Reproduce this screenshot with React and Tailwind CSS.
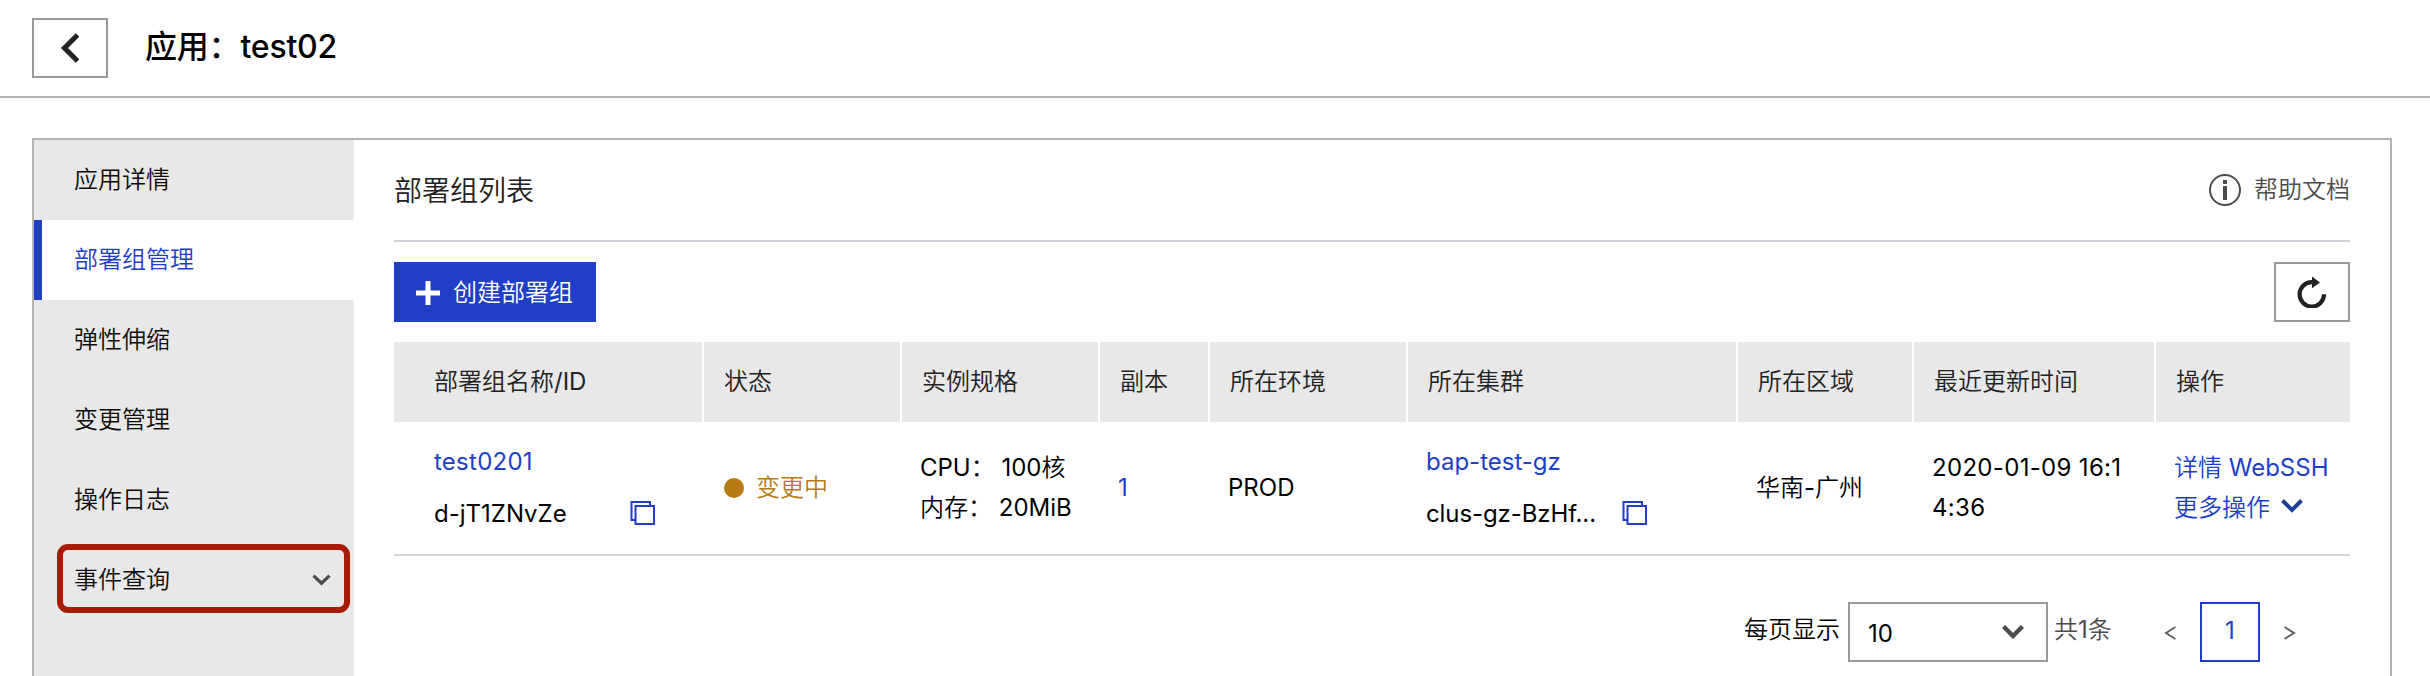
const CopyIcon = () => (
  <svg className="-mt-0.5 block h-6 w-[25px] shrink-0" viewBox="0 0 25 24" fill="none" stroke="#213fc6" strokeWidth="2">
    <path d="M5 19H1.5V1H20v4" />
    <rect x="5.5" y="5" width="18.5" height="18" />
  </svg>
);

const menu = ['应用详情', '部署组管理', '弹性伸缩', '变更管理', '操作日志', '事件查询'];
const columns = ['状态', '实例规格', '副本', '所在环境', '所在集群', '所在区域', '最近更新时间', '操作'];
const gridCols =
  'grid grid-cols-[308px_196px_196px_108px_196px_328px_174px_240px_194px] gap-x-[2px]';

function Sidebar() {
  return (
    <nav className="w-80 shrink-0 bg-[#e8e8e8]">
      {menu.map((label) => {
        const active = label === '部署组管理';
        const last = label === '事件查询';
        return (
          <div
            key={label}
            className={
              active
                ? 'flex h-20 items-center border-l-8 border-[#213fc6] bg-white pl-8 text-[#213fc6]'
                : 'relative flex h-20 items-center justify-between pl-10 pr-[23px] text-[#0c0c0c]'
            }
          >
            <span className="whitespace-nowrap">{label}</span>
            {last && (
              <>
                <svg className="h-3 w-[19px]" viewBox="0 0 19 12" fill="none" stroke="#4c4c4c" strokeWidth="3.2">
                  <path d="M1.5 1.6l8 7.6 8-7.6" />
                </svg>
                <span className="absolute left-[23px] top-[4px] h-[69px] w-[293px] rounded-[11px] border-[6px] border-[#a61c06]" />
              </>
            )}
          </div>
        );
      })}
    </nav>
  );
}

function Table() {
  return (
    <div className="mt-5">
      <div className={`${gridCols} h-20 leading-20 text-[#222]`}>
        <div className="bg-[#e8e8e8] pl-10">部署组名称/ID</div>
        {columns.map((c) => (
          <div key={c} className="bg-[#e8e8e8] pl-5">
            {c}
          </div>
        ))}
      </div>
      <div className={`${gridCols} h-[134px] items-center whitespace-nowrap border-b-2 border-[#d4d4d4] leading-10 text-black`}>
        <div className="pl-10">
          <div className="tracking-[0.25px] text-[#213fc6]">test0201</div>
          <div className="mt-3 flex w-[221px] items-center justify-between">
            <span>d-jT1ZNvZe</span>
            <CopyIcon />
          </div>
        </div>
        <div className="flex items-center gap-3 pl-5 text-[#b77a15]">
          <span className="h-5 w-5 rounded-full bg-[#b77a15]" />
          变更中
        </div>
        <div className="pl-[18px]">
          <div>CPU： 100核</div>
          <div>内存： 20MiB</div>
        </div>
        <div className="pl-[18px] text-[#213fc6]">1</div>
        <div className="pl-[18px]">PROD</div>
        <div className="pl-[18px]">
          <div className="text-[#213fc6]">bap-test-gz</div>
          <div className="mt-3 flex w-[221px] items-center justify-between">
            <span className="tracking-[-0.1px]">clus-gz-BzHf...</span>
            <CopyIcon />
          </div>
        </div>
        <div className="pl-[18px]">华南-广州</div>
        <div className="pl-[18px] tracking-[0.32px]">
          2020-01-09 16:1
          <br />
          4:36
        </div>
        <div className="pl-[18px] text-[#213fc6]">
          <div>详情 WebSSH</div>
          <div className="flex items-center gap-[11px]">
            更多操作
            <svg className="-mt-1 h-[14px] w-[22px]" viewBox="0 0 22 14" fill="none" stroke="#1f3f94" strokeWidth="4">
              <path d="M1.5 1.5L11 11l9.5-9.5" />
            </svg>
          </div>
        </div>
      </div>
    </div>
  );
}

function Pagination() {
  return (
    <div className="mt-[46px] flex h-[60px] items-center justify-end whitespace-nowrap">
      <span className="-mt-1 text-black">每页显示</span>
      <div className="ml-2 flex h-[60px] w-[200px] items-center justify-between border-2 border-[#999] pl-[18px] pr-[22px] text-black">
        <span className="mt-1">10</span>
        <svg className="h-[14px] w-[22px]" viewBox="0 0 22 14" fill="none" stroke="#4c4c4c" strokeWidth="4.4">
          <path d="M1.5 1.5L11 11l9.5-9.5" />
        </svg>
      </div>
      <span className="-mt-1 w-[116px] pl-[6px] text-[#4c4c4c]">共1条</span>
      <svg className="mt-0.5 h-[14px] w-3" viewBox="0 0 12 14" fill="none" stroke="#666" strokeWidth="2">
        <path d="M11.5 1L2 7l9.5 6" />
      </svg>
      <div className="ml-6 h-[60px] w-[60px] border-2 border-[#213fc6] text-center leading-[54px] text-[#213fc6]">1</div>
      <svg className="ml-6 mr-[54px] mt-0.5 h-[14px] w-3" viewBox="0 0 12 14" fill="none" stroke="#666" strokeWidth="2">
        <path d="M0.5 1L10 7l-9.5 6" />
      </svg>
    </div>
  );
}

export default function App() {
  return (
    <div className="flex h-[676px] w-[2430px] flex-col overflow-hidden bg-white font-['Inter','Noto_Sans_CJK_SC_DemiLight','Noto_Sans_CJK_SC',sans-serif] text-[24px]">
      <header className="flex h-[98px] shrink-0 items-center border-b-2 border-[#b4b4b4] pl-8">
        <div className="flex h-[60px] w-[76px] items-center justify-center border-2 border-[#999]">
          <svg className="h-[30px] w-[20px]" viewBox="0 0 20 30" fill="none" stroke="#222" strokeWidth="5">
            <path d="M17.5 2L4.5 15l13 13" />
          </svg>
        </div>
        <h1 className="-mt-0.5 ml-[37px] font-['Inter','Noto_Sans_CJK_SC',sans-serif] text-[32px] font-medium tracking-[-0.2px] text-black">应用：test02</h1>
      </header>
      <main className="ml-8 mt-10 flex w-[2360px] flex-1 border-x-2 border-t-2 border-[#b4b4b4]">
        <Sidebar />
        <section className="flex-1 px-10">
          <div className="flex h-[102px] items-center justify-between border-b-2 border-[#cdd1d8]">
            <h2 className="mt-px text-[28px] text-[#222]">部署组列表</h2>
            <div className="flex items-center gap-[13px] text-[#4c4c4c]">
              <svg className="h-8 w-8" viewBox="0 0 32 32">
                <circle cx="16" cy="16" r="15" fill="none" stroke="#4c4c4c" strokeWidth="2" />
                <path d="M14 6h4v4h-4zM14 12h4v14h-4z" fill="#4c4c4c" />
              </svg>
              帮助文档
            </div>
          </div>
          <div className="mt-5 flex h-[60px] items-center justify-between">
            <button className="flex h-[60px] w-[202px] items-center gap-[13px] bg-[#213fc6] pl-[22px] text-white">
              <svg className="mt-px h-6 w-6" viewBox="0 0 24 24" stroke="#fff" strokeWidth="5">
                <path d="M12 0v24M0 12h24" />
              </svg>
              <span className="mt-0.5">创建部署组</span>
            </button>
            <button className="flex h-[60px] w-[76px] items-center justify-center border-2 border-[#999]">
              <svg className="h-8 w-[30px]" viewBox="0 0 30 32">
                <path d="M27 18.3A12.2 12.2 0 1 1 14.8 6.1H17" fill="none" stroke="#222" strokeWidth="4.2" />
                <path d="M15 0.5l8 6-8 5.8z" fill="#222" />
              </svg>
            </button>
          </div>
          <Table />
          <Pagination />
        </section>
      </main>
    </div>
  );
}
